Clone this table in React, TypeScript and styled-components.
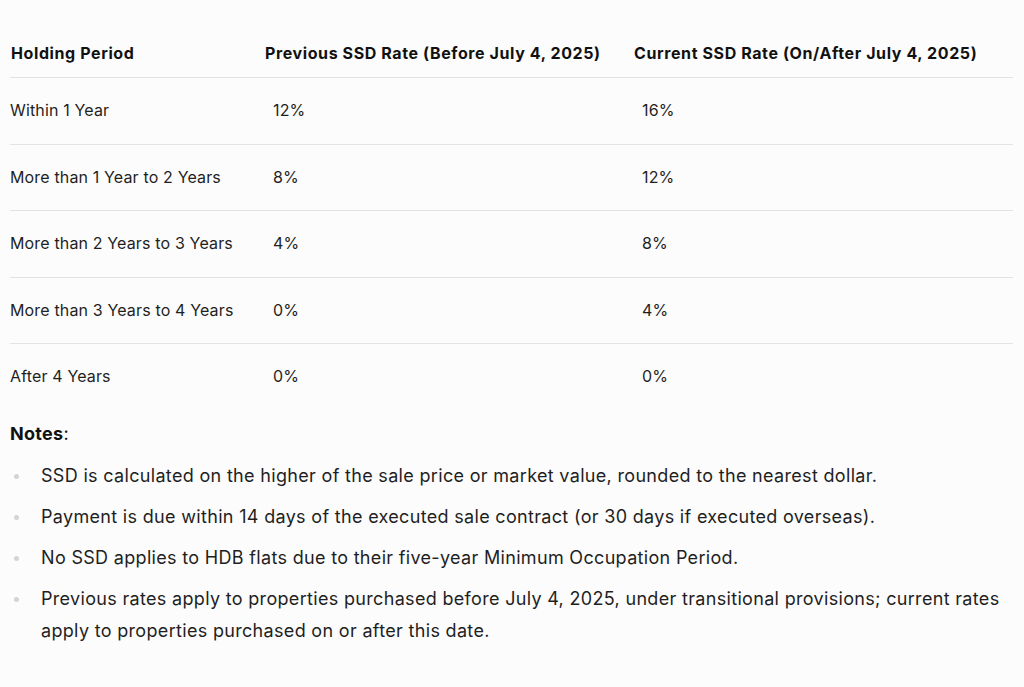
import React from 'react';
import styled, { createGlobalStyle } from 'styled-components';

// -- 데이터 --
interface RateRow {
  period: string;
  previous: string;
  current: string;
}

const rows: RateRow[] = [
  { period: 'Within 1 Year', previous: '12%', current: '16%' },
  { period: 'More than 1 Year to 2 Years', previous: '8%', current: '12%' },
  { period: 'More than 2 Years to 3 Years', previous: '4%', current: '8%' },
  { period: 'More than 3 Years to 4 Years', previous: '0%', current: '4%' },
  { period: 'After 4 Years', previous: '0%', current: '0%' },
];

const notes: string[] = [
  'SSD is calculated on the higher of the sale price or market value, rounded to the nearest dollar.',
  'Payment is due within 14 days of the executed sale contract (or 30 days if executed overseas).',
  'No SSD applies to HDB flats due to their five-year Minimum Occupation Period.',
  'Previous rates apply to properties purchased before July 4, 2025, under transitional provisions; current rates apply to properties purchased on or after this date.',
];

// -- 스타일 컴포넌트 --
const GlobalStyle = createGlobalStyle`
  html, body {
    margin: 0;
    padding: 0;
    background-color: #fcfcfc;
  }
  body {
    font-family: Inter, 'Noto Sans', sans-serif;
    color: #1a1a1a;
    -webkit-font-smoothing: antialiased;
  }
`;

const Page = styled.div`
  width: 1024px;
  height: 687px;
  box-sizing: border-box;
  padding: 30px 12px 0 10px;
  overflow: hidden;
`;

const Table = styled.table`
  width: 100%;
  border-collapse: collapse;
  table-layout: fixed;
`;

const HeadCell = styled.th<{ $width: number; $indent: number }>`
  width: ${(props): number => {
    return props.$width;
  }}px;
  padding: 12px 0 12px
    ${(props): number => {
      return props.$indent;
    }}px;
  text-align: left;
  font-size: 16px;
  line-height: 23px;
  letter-spacing: 0.6px;
  font-weight: 700;
  color: #111111;
  border-bottom: 1px solid #e3e3e3;
  white-space: nowrap;
`;

const BodyRow = styled.tr`
  border-bottom: 1px solid #e3e3e3;

  &:last-child {
    border-bottom: none;
  }
`;

const BodyCell = styled.td<{ $indent: number }>`
  padding: 22px 0 22px
    ${(props): number => {
      return props.$indent;
    }}px;
  font-size: 16px;
  line-height: 21.5px;
  letter-spacing: 0.15px;
  color: #1f1f1f;
`;

const NotesArea = styled.div`
  margin-top: 12px;
`;

const NotesTitle = styled.p`
  margin: 0 0 14px 0;
  font-size: 18px;
  line-height: 24px;
  letter-spacing: 0.3px;
  color: #111111;

  strong {
    font-weight: 700;
  }
`;

const NoteList = styled.ul`
  margin: 0;
  padding: 0;
  list-style: none;
  display: flex;
  flex-direction: column;
  gap: 9px;
`;

const NoteItem = styled.li`
  position: relative;
  padding-left: 31px;
  font-size: 18px;
  line-height: 32px;
  letter-spacing: 0.32px;
  color: #1f1f1f;

  &::before {
    content: '';
    position: absolute;
    left: 4px;
    top: 14px;
    width: 5px;
    height: 5px;
    border-radius: 50%;
    background-color: #d3d3d8;
  }
`;

const App: React.FC = () => {
  return (
    <>
      <GlobalStyle />
      <Page>
        <Table>
          <thead>
            <tr>
              <HeadCell $width={254} $indent={1}>
                Holding Period
              </HeadCell>
              <HeadCell $width={369} $indent={0}>
                Previous SSD Rate (Before July 4, 2025)
              </HeadCell>
              <HeadCell $width={379} $indent={0}>
                Current SSD Rate (On/After July 4, 2025)
              </HeadCell>
            </tr>
          </thead>
          <tbody>
            {rows.map((row) => {
              return (
                <BodyRow key={row.period}>
                  <BodyCell $indent={0}>{row.period}</BodyCell>
                  <BodyCell $indent={8}>{row.previous}</BodyCell>
                  <BodyCell $indent={8}>{row.current}</BodyCell>
                </BodyRow>
              );
            })}
          </tbody>
        </Table>
        <NotesArea>
          <NotesTitle>
            <strong>Notes</strong>:
          </NotesTitle>
          <NoteList>
            {notes.map((note) => {
              return <NoteItem key={note}>{note}</NoteItem>;
            })}
          </NoteList>
        </NotesArea>
      </Page>
    </>
  );
};

export default App;
